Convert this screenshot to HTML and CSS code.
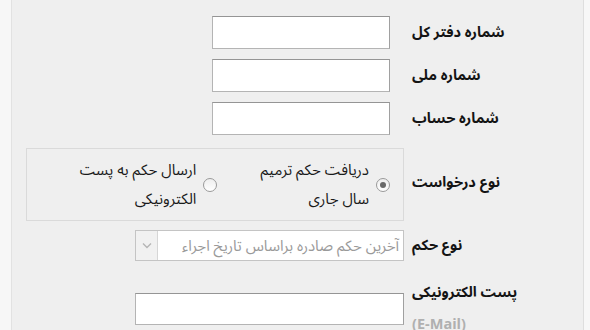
FILE: index.html
```html
<!DOCTYPE html>
<html lang="fa" dir="rtl">
<head>
<meta charset="utf-8">
<link rel="stylesheet" href="styles.css">
</head>
<body>
<div class="page">
  <form class="form">
    <label class="lbl">شماره دفتر کل</label>
    <div class="field"><input class="txt short" type="text"></div>

    <label class="lbl">شماره ملی</label>
    <div class="field"><input class="txt short" type="text"></div>

    <label class="lbl">شماره حساب</label>
    <div class="field"><input class="txt short" type="text"></div>

    <label class="lbl">نوع درخواست</label>
    <div class="field">
      <div class="radios">
        <div class="ritem">
          <span class="radio checked"></span>
          <span class="rtext">دریافت حکم ترمیم<br>سال جاری</span>
        </div>
        <div class="ritem">
          <span class="radio"></span>
          <span class="rtext">ارسال حکم به پست<br>الکترونیکی</span>
        </div>
      </div>
    </div>

    <label class="lbl">نوع حکم</label>
    <div class="field">
      <div class="select">
        <span class="seltext">آخرین حکم صادره براساس تاریخ اجراء</span>
        <span class="selbtn"><svg width="10" height="7" viewBox="0 0 10 7"><path d="M1 1.5 L5 5.5 L9 1.5" fill="none" stroke="#b5b5b5" stroke-width="1.4"/></svg></span>
      </div>
    </div>

    <label class="lbl lbl-email">پست الکترونیکی<span class="sub">(E-Mail)</span></label>
    <div class="field field-email"><input class="txt wide" type="text"></div>
  </form>
</div>
</body>
</html>
```

FILE: styles.css
```css
html, body {
  margin: 0;
  padding: 0;
  background: #f7f7f7;
  height: 330px;
  overflow: hidden;
}
.page {
  margin: 0 6px 0 11px;
  height: 330px;
  overflow: hidden;
  background: #efefef;
  border-left: 1px solid #e2e2e2;
  border-right: 1px solid #dedede;
  box-sizing: border-box;
  padding: 16px 71px 0 0;
  font-family: "Noto Sans Arabic", "DejaVu Sans", sans-serif;
}
.form {
  display: grid;
  grid-template-columns: 100px 378px;
  column-gap: 8px;
  row-gap: 10px;
  align-items: center;
}
.lbl {
  font-weight: bold;
  font-size: 14.5px;
  line-height: 20px;
  color: #141414;
  white-space: nowrap;
  text-align: left;
}
.field {
  display: flex;
}
.txt {
  height: 33px;
  box-sizing: border-box;
  background: #fff;
  border: 1px solid #b4b4b4;
  border-top-color: #959595;
  border-right-color: #a0a0a0;
  margin: 0;
  padding: 0 4px;
}
.short {
  width: 178px;
  margin-right: 14px;
}
.wide {
  width: 269px;
  height: 32px;
}
.radios {
  width: 378px;
  height: 73px;
  box-sizing: border-box;
  border: 1px solid #dadada;
  display: flex;
  align-items: center;
  padding-right: 13px;
  gap: 43px;
  margin-top: 3px;
}
.ritem {
  display: flex;
  align-items: center;
  gap: 7px;
}
.radio {
  width: 14px;
  height: 14px;
  border-radius: 50%;
  border: 1px solid #9a9a9a;
  background: linear-gradient(#eeeeee, #ffffff);
  box-sizing: border-box;
  display: flex;
  align-items: center;
  justify-content: center;
  flex: none;
}
.radio.checked::after {
  content: "";
  width: 6px;
  height: 6px;
  border-radius: 50%;
  background: #6a6a6a;
}
.rtext {
  font-size: 15px;
  line-height: 29px;
  color: #1a1a1a;
}
.select {
  width: 269px;
  height: 31px;
  box-sizing: border-box;
  background: #fff;
  border: 1px solid #c4c4c4;
  display: flex;
  align-items: stretch;
  justify-content: space-between;
  margin-top: -1px;
}
.seltext {
  font-size: 15px;
  line-height: 20px;
  color: #9a9a9a;
  align-self: center;
  padding-right: 4px;
  white-space: nowrap;
}
.selbtn {
  width: 21px;
  background: #f1f1f1;
  border-right: 1px solid #d6d6d6;
  display: flex;
  align-items: center;
  justify-content: center;
}
.lbl-email {
  display: flex;
  flex-direction: column;
  align-items: flex-end;
  line-height: 32px;
  margin-top: 6px;
}
.field-email {
  margin-top: 6px;
}
.sub {
  color: #b0b0b0;
  direction: ltr;
}
```
